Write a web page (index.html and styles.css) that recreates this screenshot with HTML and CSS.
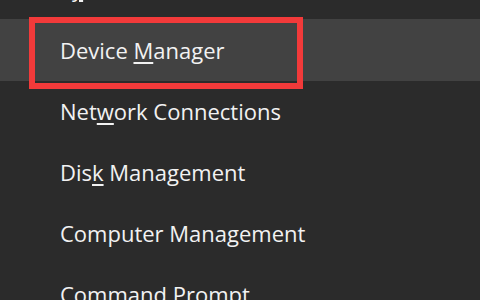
FILE: index.html
```html
<!DOCTYPE html>
<html>
<head>
<meta charset="utf-8">
<link rel="stylesheet" href="styles.css">
</head>
<body>
<div class="menu">
  <div class="item cut">S<u>y</u>stem</div>
  <div class="item hover">Device <u>M</u>anager</div>
  <div class="item">Net<u>w</u>ork Connections</div>
  <div class="item">Dis<u>k</u> Management</div>
  <div class="item">Computer Mana<u>g</u>ement</div>
  <div class="item">Command Prompt</div>
  <div class="mark"></div>
</div>
</body>
</html>
```
FILE: styles.css
```css
html, body {
  margin: 0;
  padding: 0;
  background: #2b2b2b;
}
body {
  height: 300px;
  overflow: hidden;
}
.menu {
  position: relative;
  width: 480px;
  margin-top: -42px;
}
.item {
  height: 61px;
  line-height: 61px;
  padding-left: 60px;
  font-family: "Open Sans", "Noto Sans", sans-serif;
  font-size: 22px;
  color: #f2f2f2;
  white-space: nowrap;
}
.item u {
  text-decoration-thickness: 2px;
  text-underline-offset: 3px;
}
.hover {
  background: #424242;
  height: 62px;
  line-height: 62px;
}
.mark {
  position: absolute;
  left: 29px;
  top: 59px;
  width: 274px;
  height: 72px;
  border: 6px solid #f23a3a;
  box-sizing: border-box;
}
```
